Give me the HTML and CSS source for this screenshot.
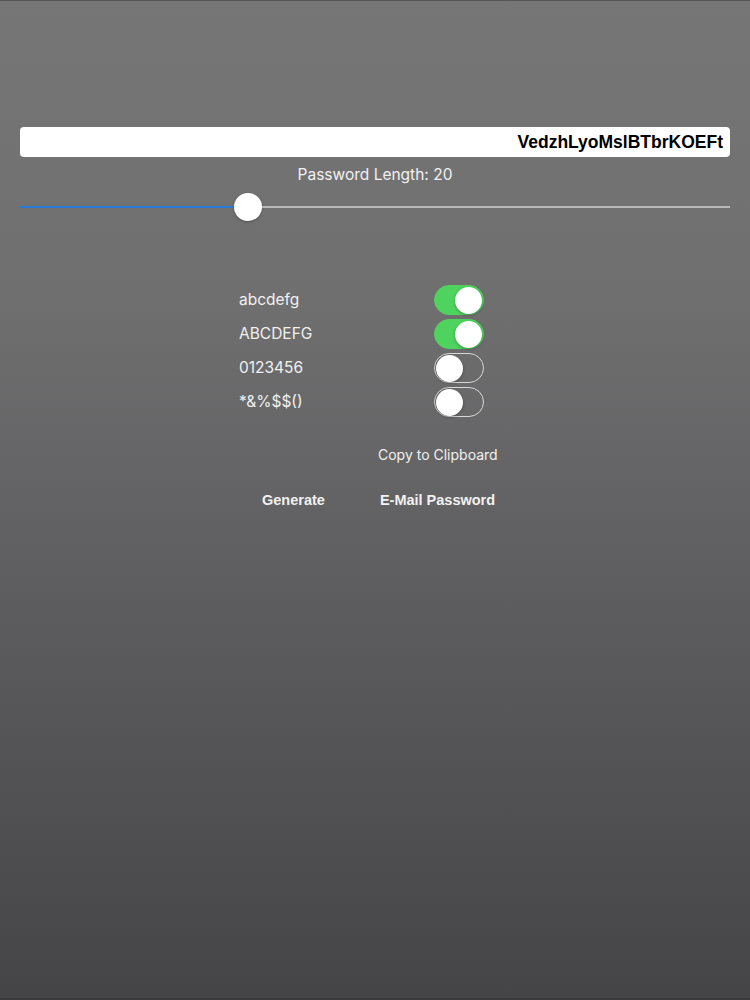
FILE: index.html
```html
<!DOCTYPE html>
<html lang="en">
<head>
	<meta charset="UTF-8">
	<title>Password Generator</title>
	<link rel="stylesheet" href="styles.css">
</head>
<body>
	<div class="screen">
		<div class="field">VedzhLyoMslBTbrKOEFt</div>
		<div class="length">Password Length: 20</div>
		<div class="slider">
			<div class="fill"></div>
			<div class="thumb"></div>
			<div class="rest"></div>
		</div>
		<div class="options">
			<span class="label">abcdefg</span>
			<span class="toggle on"><i></i></span>
			<span class="label">ABCDEFG</span>
			<span class="toggle on"><i></i></span>
			<span class="label">0123456</span>
			<span class="toggle"><i></i></span>
			<span class="label">*&amp;%$$()</span>
			<span class="toggle"><i></i></span>
		</div>
		<div class="copy">Copy to Clipboard</div>
		<div class="buttons">
			<span>Generate</span>
			<span>E-Mail Password</span>
		</div>
	</div>
</body>
</html>
```

FILE: styles.css
```css
body{margin:0;padding:0;}
.screen{
	box-sizing:border-box;
	height:1000px;
	padding:126px 20px 0;
	background:linear-gradient(#777677, #706f70 30%, #5a595b 65%, #454446);
	border-top:1px solid #555;
	border-bottom:2px solid #3a3a3a;
	font-family:Inter, "Liberation Sans", sans-serif;
	color:#f1f1f1;
}
.field{
	height:30px;
	line-height:30px;
	padding-right:7px;
	background:#fff;
	border-radius:4px;
	text-align:right;
	color:#000;
	font-family:"Liberation Sans", Arial, sans-serif;
	font-weight:bold;
	font-size:17.5px;
}
.length{
	margin-top:8px;
	height:20px;
	line-height:20px;
	text-align:center;
	font-size:15.5px;
}
.slider{
	margin-top:8px;
	height:28px;
	display:flex;
	align-items:center;
}
.fill{
	width:228px;
	height:2.5px;
	background:#2b7bd6;
}
.rest{
	flex:1;
	height:2px;
	background:#b9b9b9;
}
.thumb{
	width:28px;
	height:28px;
	margin:0 -14px;
	border-radius:50%;
	background:#fff;
	box-shadow:0 1px 3px rgba(0,0,0,.25);
	position:relative;
	z-index:1;
}
.options{
	margin:64px 0 0 219px;
	display:grid;
	grid-template-columns:195px 50px;
	row-gap:4px;
	align-items:center;
}
.label{
	font-size:15.5px;
	line-height:30px;
}
.toggle{
	box-sizing:border-box;
	width:50px;
	height:30px;
	border-radius:15px;
	border:1.5px solid #d8d8d8;
	display:flex;
	align-items:center;
	padding:0 1px;
}
.toggle i{
	width:27px;
	height:27px;
	border-radius:50%;
	background:#fff;
	box-shadow:0 1px 3px rgba(0,0,0,.3);
}
.toggle.on{
	background:#4dd35e;
	border-color:#4dd35e;
	justify-content:flex-end;
}
.copy{
	margin:28px 0 0 358px;
	height:20px;
	line-height:20px;
	font-size:14px;
}
.buttons{
	margin:25px 0 0 242px;
	display:flex;
	gap:55px;
	height:20px;
	line-height:20px;
	font-family:"Liberation Sans", Arial, sans-serif;
	font-weight:bold;
	font-size:14.5px;
}
```
